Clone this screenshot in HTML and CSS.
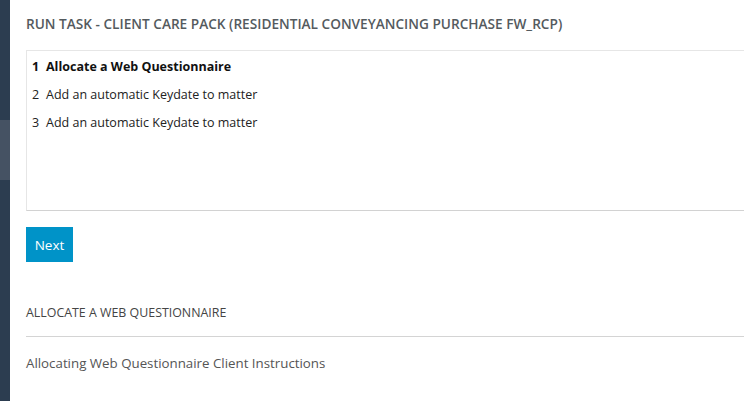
FILE: index.html
```html
<!DOCTYPE html>
<html>
<head>
<meta charset="utf-8">
<link rel="stylesheet" href="styles.css">
</head>
<body>
<div class="app">
  <aside class="sidebar">
    <div class="seg seg-top"></div>
    <div class="seg seg-active"></div>
    <div class="seg seg-rest"></div>
  </aside>
  <main class="main">
    <h1 class="title">RUN TASK - CLIENT CARE PACK (RESIDENTIAL CONVEYANCING PURCHASE FW_RCP)</h1>
    <div class="task-box">
      <div class="task-row active"><span class="num">1</span><span>Allocate a Web Questionnaire</span></div>
      <div class="task-row"><span class="num">2</span><span>Add an automatic Keydate to matter</span></div>
      <div class="task-row"><span class="num">3</span><span>Add an automatic Keydate to matter</span></div>
    </div>
    <button class="btn-next">Next</button>
    <h2 class="section-title">ALLOCATE A WEB QUESTIONNAIRE</h2>
    <p class="section-text">Allocating Web Questionnaire Client Instructions</p>
  </main>
</div>
</body>
</html>
```
FILE: styles.css
```css
html, body {
  margin: 0;
  padding: 0;
  background: #ffffff;
  height: 100%;
  overflow: hidden;
}
body {
  font-family: "Open Sans", "Noto Sans", sans-serif;
  color: #333;
}
.app {
  display: flex;
  height: 401px;
}
.sidebar {
  width: 10px;
  flex: 0 0 10px;
  display: flex;
  flex-direction: column;
}
.seg-top { height: 120px; background: #2c3d50; }
.seg-active { height: 60px; background: #455263; }
.seg-rest { flex: 1; background: #2c3d50; }
.main {
  flex: 1;
  padding-left: 16px;
  min-width: 0;
  overflow: hidden;
}
.title {
  margin: 0;
  padding-top: 14px;
  height: 50px;
  box-sizing: border-box;
  font-size: 13.65px;
  font-weight: 600;
  line-height: 20px;
  color: #545a5e;
  white-space: nowrap;
}
.task-box {
  width: 800px;
  height: 161px;
  box-sizing: border-box;
  border: 1px solid #e6e6e6;
  border-right: none;
  border-bottom: 1px solid #d2d2d2;
  padding: 2px 0 0 5px;
}
.task-row {
  height: 28px;
  line-height: 28px;
  font-size: 12.5px;
  color: #222;
  white-space: nowrap;
}
.task-row .num {
  display: inline-block;
  width: 14px;
}
.task-row.active {
  font-weight: 700;
  color: #111;
}
.btn-next {
  display: block;
  margin-top: 16px;
  width: 47px;
  height: 35px;
  border: none;
  background: #0093c8;
  color: #ffffff;
  font-family: "Open Sans", "Noto Sans", sans-serif;
  font-size: 13.5px;
  padding: 0;
}
.section-title {
  margin: 0;
  height: 75px;
  box-sizing: border-box;
  padding-top: 42px;
  font-size: 12.4px;
  font-weight: 400;
  line-height: 18px;
  color: #444;
  border-bottom: 1px solid #d4d4d4;
}
.section-text {
  margin: 0;
  padding-top: 16px;
  font-size: 13.3px;
  line-height: 20px;
  color: #555;
}
```
